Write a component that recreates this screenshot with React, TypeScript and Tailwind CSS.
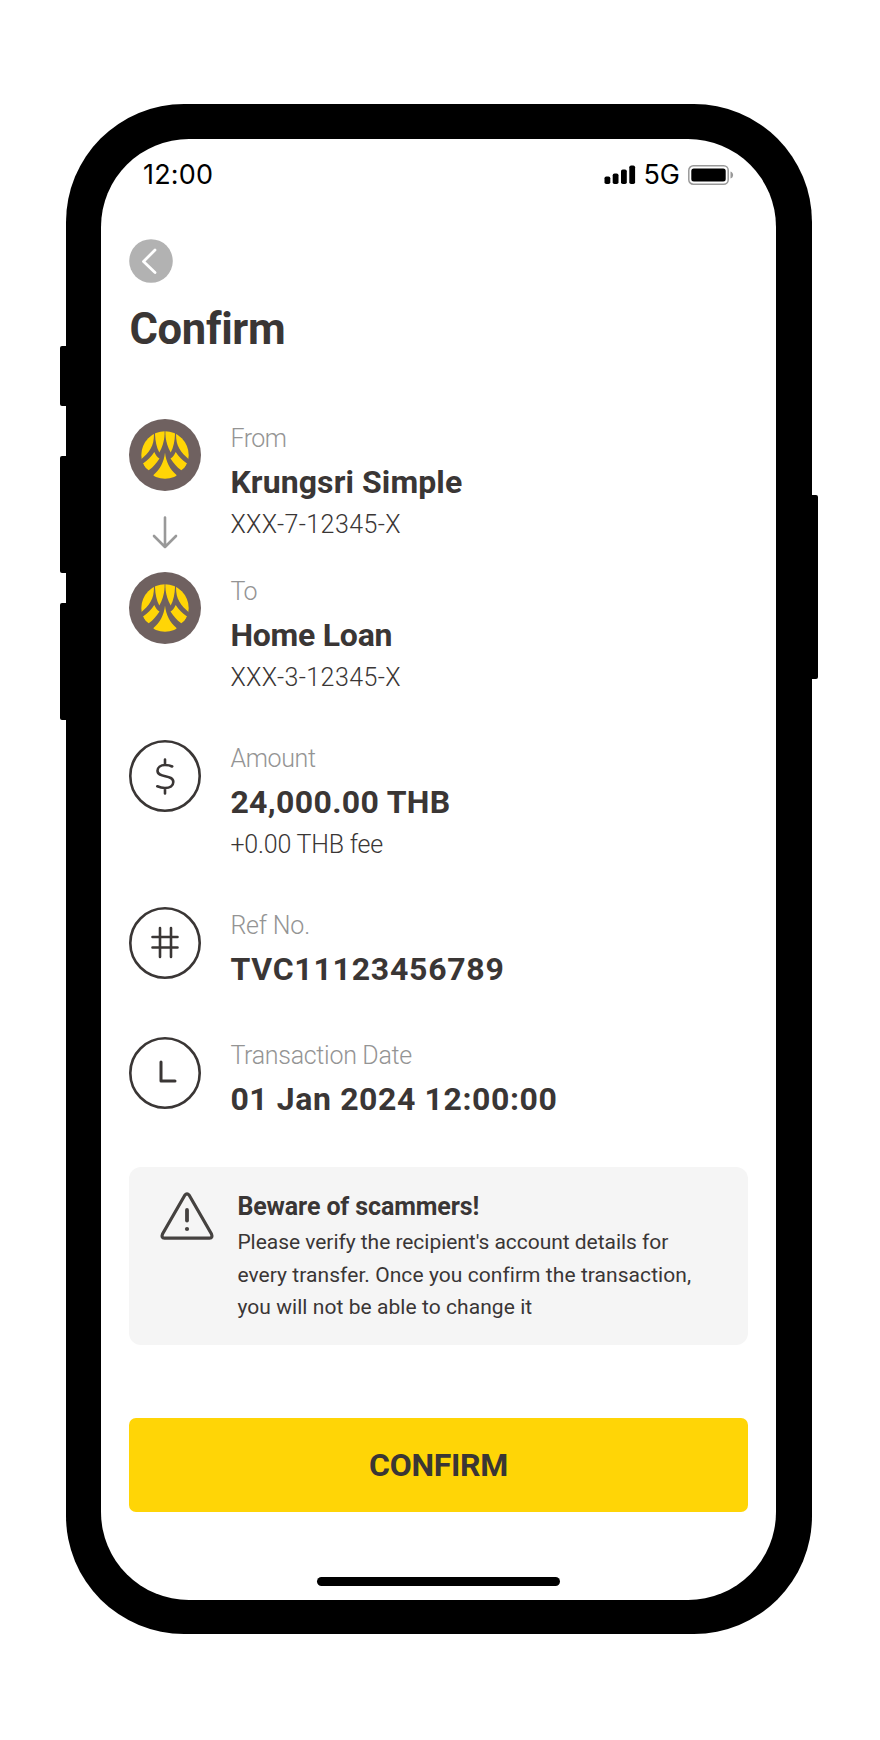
import type { ReactNode } from 'react'

function BankLogo() {
  return (
    <svg viewBox="0 0 72 72" className="h-[72px] w-[72px]">
      <circle cx="36" cy="36" r="36" fill="#6f6160" />
      <clipPath id="disc">
        <circle cx="36" cy="36" r="23.7" />
      </clipPath>
      <g clipPath="url(#disc)" fill="#ffd506">
        <path d="M25 10V15C25 21 24 26 21.700 29.500C19.500 33.500 16 37 12 40.500L5 41V10Z" />
        <path d="M26 10V15C26.300 22 27.500 28.500 30.300 33.500C33 28.500 35.200 23 35.600 15V10Z" />
        <path d="M46 10V15C45.700 22 44.500 28.500 41.700 33.500C39 28.500 36.800 23 36.400 15V10Z" />
        <path d="M47 10V15C47 21 48 26 50.300 29.500C52.500 33.500 56 37 60 40.500L67 41V10Z" />
        <path d="M25.300 33C26.500 36 28.500 38.300 30.500 39.500C27.500 44 24.500 48 19.700 51.300C17 49.500 15 47 14 44.500C18.500 41.500 22.500 37.500 25.300 33Z" />
        <path d="M46.700 33C45.500 36 43.500 38.300 41.500 39.500C44.500 44 47.500 48 52.300 51.300C55 49.500 57 47 58 44.500C53.500 41.500 49.500 37.500 46.700 33Z" />
        <path d="M36 33.500C37 43 41 50.500 47.500 56V62H24.500V56C31 50.500 35 43 36 33.500Z" />
      </g>
    </svg>
  )
}

function RingIcon({ children }: { children: ReactNode }) {
  return (
    <svg
      viewBox="0 0 72 72"
      className="h-[72px] w-[72px]"
      fill="none"
      stroke="#3a3635"
      strokeWidth="2.6"
      strokeLinecap="round"
      strokeLinejoin="round"
    >
      <circle cx="36" cy="36" r="34.7" />
      {children}
    </svg>
  )
}

type RowProps = {
  icon: ReactNode
  label: string
  value: string
  note?: string
  labelClass?: string
  valueClass?: string
  noteClass?: string
}

function Row({ icon, label, value, note, labelClass = '', valueClass = '', noteClass = '' }: RowProps) {
  return (
    <>
      <div className="w-[72px] shrink-0">{icon}</div>
      <div className="ml-[29px] whitespace-nowrap">
        <p className={`text-[25px] leading-[38px] font-light text-[#949494] ${labelClass}`}>{label}</p>
        <p className={`text-[32px] leading-[48px] font-bold ${valueClass}`}>{value}</p>
        {note && <p className={`text-[25px] leading-[38px] font-light ${noteClass}`}>{note}</p>}
      </div>
    </>
  )
}

function StatusBar() {
  return (
    <div className="flex h-[44px] items-center justify-between pr-[42px] pl-[42px] font-['Inter',sans-serif] text-[27px] text-black">
      <span className="tracking-[0.2px]">12:00</span>
      <div className="flex items-center">
        <svg viewBox="0 0 32 20" className="mr-[7px] h-[20px] w-[32px]">
          <rect x="0.500" y="11.500" width="5.800" height="7.500" rx="1.800" />
          <rect x="8.700" y="8.500" width="5.800" height="10.500" rx="1.800" />
          <rect x="17" y="4.500" width="5.800" height="14.500" rx="1.800" />
          <rect x="25.300" y="0.500" width="5.800" height="18.500" rx="1.800" />
        </svg>
        <span>5G</span>
        <svg viewBox="0 0 46 20" className="ml-[8px] h-[20px] w-[46px]">
          <rect x="0.800" y="0.800" width="39.400" height="18.400" rx="4.500" fill="none" stroke="#999" strokeWidth="1.500" />
          <rect x="3.300" y="3.500" width="34.400" height="13" rx="2.500" />
          <path d="M42.500 6.500C46 7.500 46 12.500 42.500 13.500Z" fill="#999" />
        </svg>
      </div>
    </div>
  )
}

export default function App() {
  return (
    <div className="flex h-[1740px] w-[880px] bg-white pt-[104px] pl-[60px] font-['Roboto',sans-serif] text-[#3a3635] [font-variant-ligatures:none]">
      <div className="w-[6px] pt-[242px]">
        <div className="h-[60px] rounded-l-[2px] bg-black" />
        <div className="mt-[50px] h-[117px] rounded-l-[2px] bg-black" />
        <div className="mt-[30px] h-[117px] rounded-l-[2px] bg-black" />
      </div>

      <div className="h-[1530px] w-[746px] rounded-[118px] bg-black pt-[35px] pr-[36px] pl-[35px]">
        <div className="h-[1461px] rounded-[88px] bg-white pt-[14px]">
          <StatusBar />

          <div className="px-[28.400px]">
            <svg viewBox="0 0 44 44" className="mt-[42px] h-[44px] w-[44px]" fill="none">
              <circle cx="22" cy="22" r="21.800" fill="#b2b2b2" />
              <path d="M26 11L14.500 22.500L26 33.500" stroke="#fff" strokeWidth="2.800" strokeLinecap="round" strokeLinejoin="round" />
            </svg>
            <h1 className="mt-[21px] text-[43.500px] leading-[52px] font-bold tracking-[-0.3px]">Confirm</h1>

            <div className="mt-[63px] flex h-[153px]">
              <Row
                icon={
                  <>
                    <BankLogo />
                    <svg viewBox="0 0 72 34" className="mt-[24px] h-[34px] w-[72px]" fill="none" stroke="#999" strokeWidth="2.6" strokeLinecap="round" strokeLinejoin="round">
                      <path d="M36 2.500V32M25 21L36 32L47 21" />
                    </svg>
                  </>
                }
                label="From"
                value="Krungsri Simple"
                note="XXX-7-12345-X"
                labelClass="pt-px tracking-[-0.5px]"
                valueClass="tracking-[0.1px]"
                noteClass="tracking-[0.4px]"
              />
            </div>
            <div className="flex h-[168px]">
              <Row
                icon={<BankLogo />}
                label="To"
                value="Home Loan"
                note="XXX-3-12345-X"
                labelClass="pt-px tracking-[-0.5px]"
                valueClass="tracking-[-0.25px]"
                noteClass="tracking-[0.4px]"
              />
            </div>
            <div className="flex h-[167px]">
              <Row
                icon={
                  <RingIcon>
                    <path d="M36 19.500V25M36 48V53.500M43.200 26.500C41 25.300 38.500 25 36 25C31.500 25 28.500 27.500 28.500 30.800C28.500 38.500 44.300 34 44.300 42C44.300 45.800 41 48 36 48C33 48 30.500 47.300 28.300 46.300" />
                  </RingIcon>
                }
                label="Amount"
                value="24,000.00 THB"
                note="+0.00 THB fee"
                labelClass="tracking-[-0.35px]"
                valueClass="tracking-[0.35px]"
                noteClass="tracking-[-0.2px]"
              />
            </div>
            <div className="flex h-[130px]">
              <Row
                icon={
                  <RingIcon>
                    <path d="M31 21V50M42 21V50M23.500 30H48.500M23.500 40.500H48.500" />
                  </RingIcon>
                }
                label="Ref No."
                value="TVC11123456789"
                labelClass="tracking-[-0.2px]"
                valueClass="tracking-[0.75px]"
              />
            </div>
            <div className="flex h-[130px]">
              <Row
                icon={
                  <RingIcon>
                    <path d="M32 25V44H46" strokeWidth="3" />
                  </RingIcon>
                }
                label="Transaction Date"
                value="01 Jan 2024 12:00:00"
                labelClass="tracking-[-0.3px]"
                valueClass="tracking-[0.6px]"
              />
            </div>

            <div className="flex h-[178px] rounded-[12px] bg-[#f5f5f5] pt-[25px] pl-[31px]">
              <svg viewBox="0 0 54 48" className="h-[48px] w-[54px] shrink-0" fill="none" stroke="#454240" strokeWidth="3.2" strokeLinecap="round" strokeLinejoin="round">
                <path d="M24.800 3.200Q27 0.500 29.200 3.200L51.500 42Q53 46 49.500 46.200H4.500Q1 46 2.500 42Z" />
                <path d="M27 18V28.500" strokeWidth="3.8" />
                <circle cx="27" cy="37" r="2.100" fill="#454240" stroke="none" />
              </svg>
              <div className="ml-[23px] whitespace-nowrap">
                <p className="text-[25px] leading-[30px] font-bold tracking-[-0.12px]">Beware of scammers!</p>
                <p className="mt-[4px] text-[21px] leading-[32.500px]">
                  <span className="tracking-[-0.040px]">Please verify the recipient's account details for</span>
                  <br />
                  <span className="tracking-[0.060px]">every transfer. Once you confirm the transaction,</span>
                  <br />
                  <span className="tracking-[0.060px]">you will not be able to change it</span>
                </p>
              </div>
            </div>

            <button className="mt-[73px] h-[94px] w-full rounded-[7px] bg-[#ffd506] text-[32px] font-bold tracking-[-0.3px]">CONFIRM</button>
            <div className="mx-auto mt-[65px] h-[9px] w-[243px] rounded-full bg-black" />
          </div>
        </div>
      </div>

      <div className="w-[6px] pt-[391px]">
        <div className="h-[184px] rounded-r-[2px] bg-black" />
      </div>
    </div>
  )
}
